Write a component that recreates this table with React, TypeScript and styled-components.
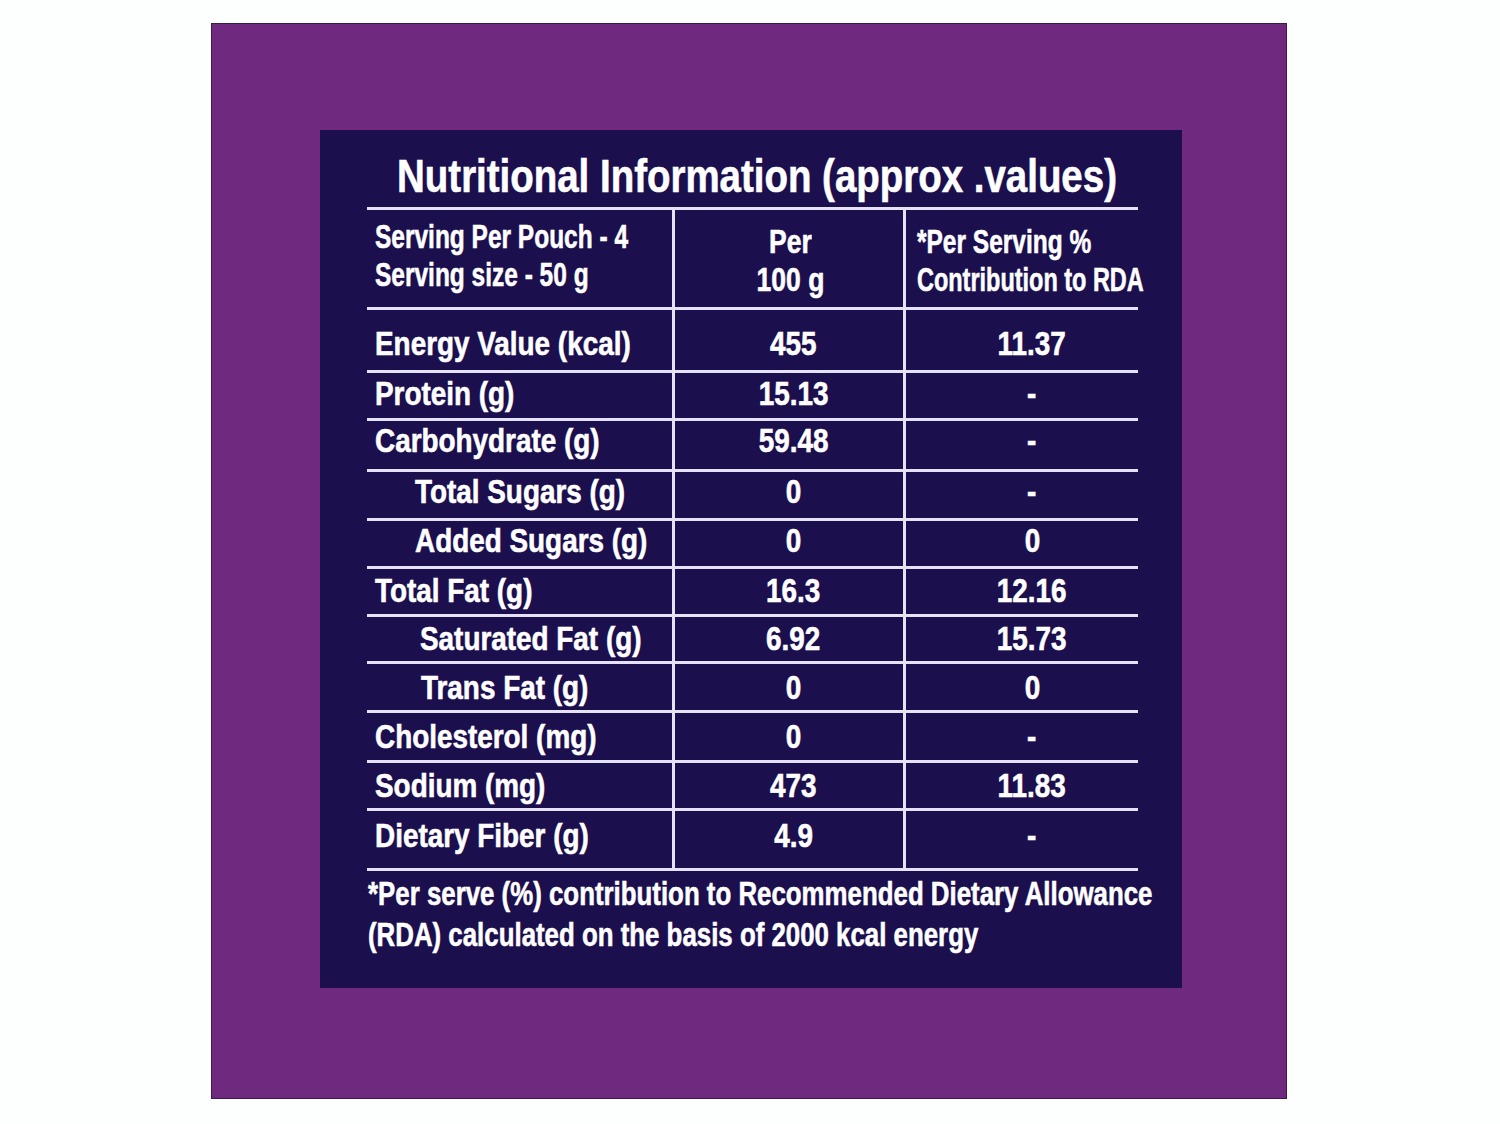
import React from "react";
import styled, { createGlobalStyle } from "styled-components";

const LINE = "#e4e2f4";
const NAVY = "#1c0f4d";
const PURPLE = "#6f2a7f";

const GlobalStyle = createGlobalStyle`
  html, body { margin: 0; padding: 0; background: #fdfefe; }
  #root { width: 1500px; height: 1124px; }
`;

const Page = styled.div`
  width: 1500px;
  height: 1124px;
  box-sizing: border-box;
  padding: 23px 0 0 211px;
  display: flex;
  align-items: flex-start;
  font-family: "Liberation Sans", Arial, sans-serif;
  font-weight: 700;
  color: #ffffff;
`;

const PurpleBox = styled.div`
  width: 1076px;
  height: 1076px;
  box-sizing: border-box;
  border: 1px solid #3d1947;
  background: ${PURPLE};
  padding: 106px 0 0 108px;
  display: flex;
  align-items: flex-start;
`;

const Panel = styled.div`
  width: 862px;
  height: 858px;
  box-sizing: border-box;
  background: ${NAVY};
  padding: 20px 0 0 47px;
  display: flex;
  flex-direction: column;
  align-items: flex-start;
`;

const Title = styled.h1`
  margin: 0 0 5px 0;
  width: 771px;
  box-sizing: border-box;
  padding-left: 9px;
  display: flex;
  justify-content: center;
  font-size: 47px;
  line-height: 52px;
  font-weight: 700;
  white-space: nowrap;
`;

/* condensed text: the reference uses a condensed grotesque */
const Squeeze = styled.span<{ $sx: number; $origin?: "left" | "center" }>`
  display: inline-block;
  white-space: nowrap;
  -webkit-text-stroke: 0.6px #ffffff;
  transform: scaleX(${(p) => p.$sx});
  transform-origin: ${(p) => p.$origin ?? "left"} center;
`;

const Table = styled.div`
  width: 771px;
  display: flex;
  flex-direction: column;
  border-bottom: 3px solid ${LINE};
`;

const Row = styled.div<{ $h: number }>`
  display: grid;
  grid-template-columns: 305px 231px 235px;
  height: ${(p) => p.$h + 3}px;
  box-sizing: border-box;
  border-top: 3px solid ${LINE};
`;

const Cell = styled.div<{ $pad: number }>`
  padding-top: ${(p) => p.$pad}px;
  font-size: 34px;
  line-height: 34px;
  white-space: nowrap;
`;

const LabelCell = styled(Cell)<{ $indent: number }>`
  padding-left: ${(p) => p.$indent}px;
`;

const ValueCell = styled(Cell)<{ $shift: number }>`
  border-left: 3px solid ${LINE};
  padding-left: ${(p) => p.$shift}px;
  display: flex;
  justify-content: center;
  align-items: flex-start;
`;

const HeadCell = styled.div<{ $pad: number; $align: "left" | "center"; $shift: number; $divider: boolean }>`
  padding-top: ${(p) => p.$pad}px;
  padding-left: ${(p) => p.$shift}px;
  border-left: ${(p) => (p.$divider ? `3px solid ${LINE}` : "none")};
  text-align: ${(p) => p.$align};
  font-size: 34px;
  line-height: 38px;
  white-space: nowrap;
`;

const HeadLine = styled.div``;

const Footer = styled.div`
  margin-top: 2px;
  padding-left: 1px;
  font-size: 34px;
  line-height: 41px;
  white-space: nowrap;
`;

const FooterLine = styled.div``;

type Nutrient = {
  label: string;
  per: string;
  rda: string;
  h: number;
  pad: number;
  indent?: number;
};

const rows: Nutrient[] = [
  { label: "Energy Value (kcal)", per: "455", rda: "11.37", h: 60, pad: 16 },
  { label: "Protein (g)", per: "15.13", rda: "-", h: 45, pad: 3 },
  { label: "Carbohydrate (g)", per: "59.48", rda: "-", h: 48, pad: 2 },
  { label: "Total Sugars (g)", per: "0", rda: "-", h: 46, pad: 2, indent: 48 },
  { label: "Added Sugars (g)", per: "0", rda: "0", h: 45, pad: 2, indent: 48 },
  { label: "Total Fat (g)", per: "16.3", rda: "12.16", h: 45, pad: 4 },
  { label: "Saturated Fat (g)", per: "6.92", rda: "15.73", h: 44, pad: 4, indent: 53 },
  { label: "Trans Fat (g)", per: "0", rda: "0", h: 46, pad: 6, indent: 54 },
  { label: "Cholesterol (mg)", per: "0", rda: "-", h: 47, pad: 6 },
  { label: "Sodium (mg)", per: "473", rda: "11.83", h: 45, pad: 5 },
  { label: "Dietary Fiber (g)", per: "4.9", rda: "-", h: 57, pad: 7 },
];

const BODY_SX = 0.82;
const HEAD_SX = 0.72;

export default function App() {
  return (
    <>
      <GlobalStyle />
      <Page>
        <PurpleBox>
          <Panel>
            <Title>
              <Squeeze $sx={0.818} $origin="center">
                Nutritional Information (approx .values)
              </Squeeze>
            </Title>
            <Table>
              <Row $h={97}>
                <HeadCell $pad={7} $align="left" $shift={8} $divider={false}>
                  <HeadLine>
                    <Squeeze $sx={HEAD_SX}>Serving Per Pouch - 4</Squeeze>
                  </HeadLine>
                  <HeadLine>
                    <Squeeze $sx={HEAD_SX}>Serving size - 50 g</Squeeze>
                  </HeadLine>
                </HeadCell>
                <HeadCell $pad={12} $align="center" $shift={3} $divider>
                  <HeadLine>
                    <Squeeze $sx={0.78} $origin="center">Per</Squeeze>
                  </HeadLine>
                  <HeadLine>
                    <Squeeze $sx={0.78} $origin="center">100 g</Squeeze>
                  </HeadLine>
                </HeadCell>
                <HeadCell $pad={12} $align="left" $shift={11} $divider>
                  <HeadLine>
                    <Squeeze $sx={HEAD_SX}>*Per Serving %</Squeeze>
                  </HeadLine>
                  <HeadLine>
                    <Squeeze $sx={0.69}>Contribution to RDA</Squeeze>
                  </HeadLine>
                </HeadCell>
              </Row>
              {rows.map((r) => (
                <Row key={r.label} $h={r.h}>
                  <LabelCell $pad={r.pad} $indent={r.indent ?? 8}>
                    <Squeeze $sx={BODY_SX}>{r.label}</Squeeze>
                  </LabelCell>
                  <ValueCell $pad={r.pad} $shift={9}>
                    <Squeeze $sx={BODY_SX} $origin="center">
                      {r.per}
                    </Squeeze>
                  </ValueCell>
                  <ValueCell $pad={r.pad} $shift={20}>
                    <Squeeze $sx={BODY_SX} $origin="center">
                      {r.rda}
                    </Squeeze>
                  </ValueCell>
                </Row>
              ))}
            </Table>
            <Footer>
              <FooterLine>
                <Squeeze $sx={0.76}>*Per serve (%) contribution to Recommended Dietary Allowance</Squeeze>
              </FooterLine>
              <FooterLine>
                <Squeeze $sx={0.76}>(RDA) calculated on the basis of 2000 kcal energy</Squeeze>
              </FooterLine>
            </Footer>
          </Panel>
        </PurpleBox>
      </Page>
    </>
  );
}
